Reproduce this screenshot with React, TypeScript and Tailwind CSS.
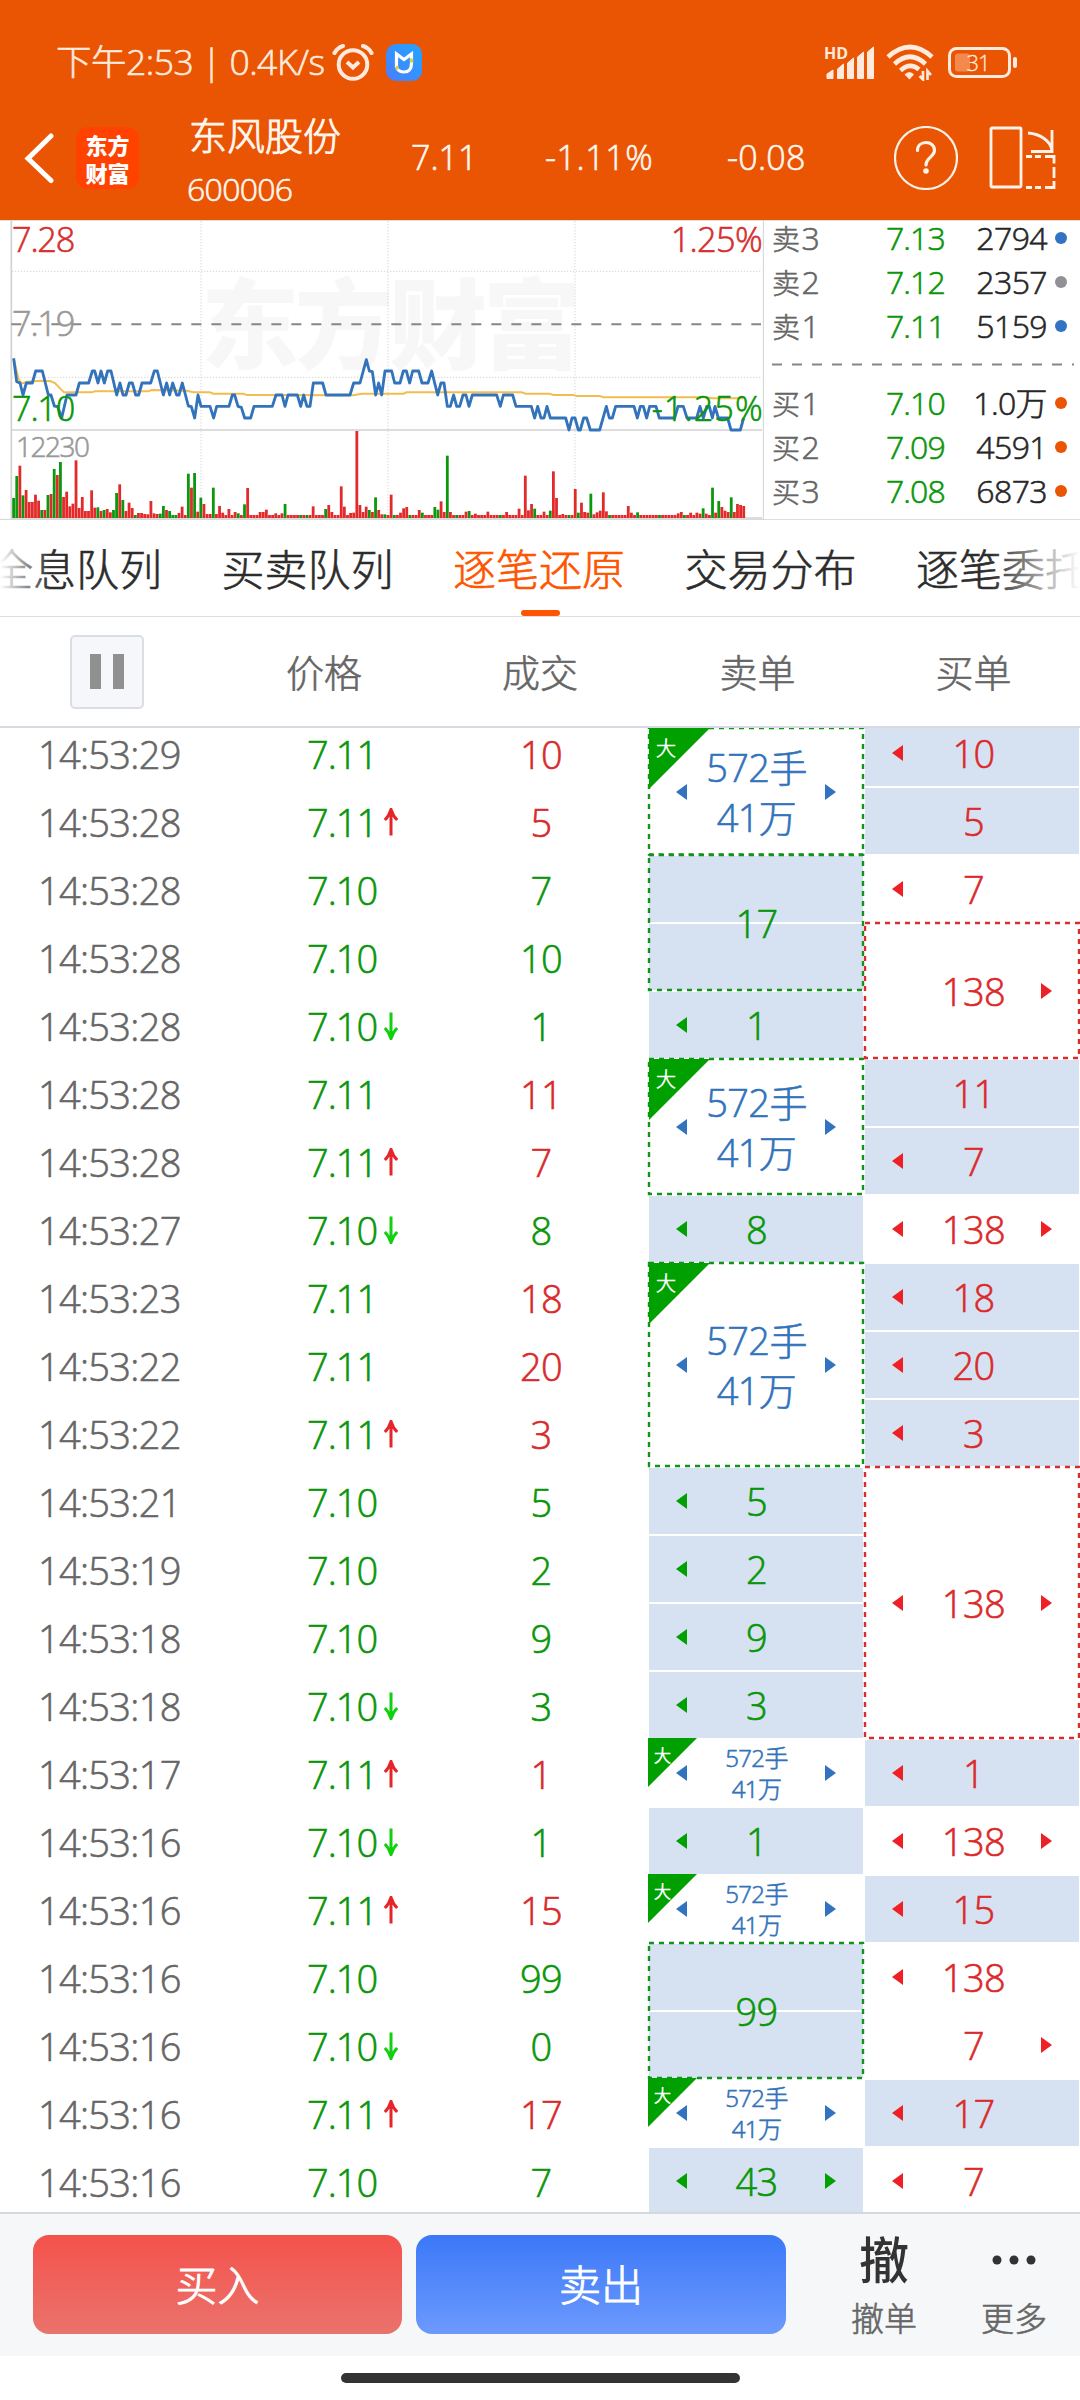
import React from "react";

const GREEN = "#0a960a";
const RED = "#ee1f25";
const BLUE = "#3273c0";

/* ---------- status bar ---------- */

function StatusBar() {
  return (
    <div className="flex h-[124px] items-center pl-[56px] pr-[62px] text-[#ffeadd]">
      <span className="w-[269px] whitespace-nowrap text-[35.5px] leading-none tracking-[-0.5px]">
        下午2:53 | 0.4K/s
      </span>
      <svg className="ml-[7px] h-[40px] w-[42px]" viewBox="0 0 42 40" fill="none" stroke="#ffeadd">
        <circle cx="21" cy="22.5" r="14.3" strokeWidth="4" />
        <path d="M15 20l6 5.500 6-5.500" strokeWidth="4" />
        <path d="M2.500 11Q5 6 11 4M39.500 11Q37 6 31 4" strokeWidth="4" strokeLinecap="round" />
      </svg>
      <svg className="ml-[12px] h-[37px] w-[36px]" viewBox="0 0 36 37">
        <defs>
          <linearGradient id="home" x1="0" y1="1" x2="1" y2="0">
            <stop offset="0" stopColor="#4a7dff" />
            <stop offset="1" stopColor="#22a5ff" />
          </linearGradient>
        </defs>
        <rect width="36" height="37" rx="10" fill="url(#home)" />
        <path
          d="M10.500 24V10l7.500 5.500 7.500-5.500v9.500c0 5.500-3 8.500-7.500 8.500-3.500 0-5.500-1.200-7-3.500"
          fill="none"
          stroke="#fff"
          strokeWidth="3.200"
        />
        <path d="M25.500 14.500v4M10 22.500l2 3" stroke="#d9d43c" strokeWidth="3.200" />
      </svg>
      <svg className="ml-auto h-[36px] w-[52px] overflow-visible" viewBox="0 0 52 36">
        <text x="0" y="14.500" fontSize="16" fontWeight="700" fill="#ffeadd" textLength="24">
          HD
        </text>
        <path
          d="M3 30l6-4v8.500H3zM13.500 25l6-5v14.500h-6zM23.500 19l6-5v20.500h-6zM33.500 13l6-5v26.500h-6zM43.500 8l6-5v31.500h-6z"
          fill="#ffeadd"
          stroke="#ffeadd"
          strokeLinejoin="round"
        />
      </svg>
      <svg className="ml-[10px] h-[38px] w-[48px]" viewBox="0 0 48 38" fill="none" stroke="#ffeadd" strokeWidth="4.600">
        <path d="M2 14Q24-6 46 14" />
        <path d="M8.500 21Q24 6.500 39.500 21" />
        <path d="M14.500 27.500Q24 19 33 26.500" />
        <path d="M18.500 31.500Q23.500 26.500 28 31.500L23.500 36.500z" fill="#ffeadd" stroke="none" />
        <path d="M37 28v8.500l-3.500-3.500M41.500 37v-9l3.500 4" strokeWidth="2.600" />
      </svg>
      <svg className="ml-[14px] h-[32px] w-[70px]" viewBox="0 0 70 32">
        <rect x="1.500" y="2.500" width="60" height="28" rx="7" fill="none" stroke="#ffeadd" strokeWidth="3" />
        <rect x="7" y="7.500" width="15" height="18" rx="3" fill="#f5884d" />
        <rect x="65" y="11" width="4" height="11" rx="2" fill="#ffeadd" />
        <text x="18.500" y="24.500" fontSize="22" fill="#ffeadd" stroke="#ffeadd" strokeWidth="0.300" textLength="24">
          31
        </text>
      </svg>
    </div>
  );
}

/* ---------- title bar ---------- */

function TitleBar() {
  return (
    <div className="flex h-[96px] items-start pl-[24px] text-[#fff7f0]">
      <svg className="mt-[8px] h-[52px] w-[32px]" viewBox="0 0 32 52" fill="none" stroke="#fff" strokeWidth="5" strokeLinecap="round">
        <path d="M27 4L4 26.500 27 48.500" />
      </svg>
      <div className="ml-[20px] mt-[3px] flex h-[62px] w-[63px] flex-col items-center justify-center rounded-[12px] bg-[#ff4200] font-['Noto_Sans_CJK_SC',sans-serif] text-[22px] font-black leading-[28px] text-white [-webkit-text-stroke:0]">
        <span>东方</span>
        <span>财富</span>
      </div>
      <div className="ml-[48px] w-[224px] whitespace-nowrap">
        <div className="pl-[2px] text-[38px] leading-[22px] [-webkit-text-stroke:0.9px]">东风股份</div>
        <div className="mt-[31px] text-[32px] leading-[24px] tracking-[-0.7px]">600006</div>
      </div>
      <span className="mt-[15px] w-[134px] whitespace-nowrap text-[34px] leading-[36px]">7.11</span>
      <span className="mt-[15px] w-[182px] whitespace-nowrap text-[34px] leading-[36px] tracking-[0.6px]">-1.11%</span>
      <span className="mt-[15px] w-[167px] whitespace-nowrap text-[34px] leading-[36px] tracking-[0.3px]">-0.08</span>
      <svg className="mt-[2px] h-[64px] w-[64px]" viewBox="0 0 64 64" fill="none" stroke="#fff2e8">
        <circle cx="32" cy="32" r="31" strokeWidth="2.200" />
        <path d="M23.500 24.500c0-5 3.800-8 8.500-8s8.500 3 8.500 7.800c0 6.500-8.500 7.200-8.500 14.700" strokeWidth="3.200" strokeLinecap="round" />
        <circle cx="32" cy="45" r="2.800" fill="#fff2e8" stroke="none" />
      </svg>
      <svg className="ml-[31px] mt-[2px] h-[66px] w-[68px]" viewBox="0 0 68 66" fill="none" stroke="#fff2e8" strokeWidth="2.800">
        <rect x="2" y="2" width="30" height="59" rx="1" />
        <path d="M39 7c13 1 22 8 24 17" />
        <path d="M63 4v21.500H42" />
        <path d="M37 30.500h6M46 30.500h6M56 30.500h9v7M65 41v11M65 55v6.500h-9M52 61.500h-6M43 61.500h-6" />
      </svg>
    </div>
  );
}

/* ---------- intraday chart ---------- */

const PRICE_POINTS =
  "41,430 50,500 60,504 69,540 79,504 97,504 107,468 127,468 145,540 153,540 163,573 173,575 185,609 201,540 228,540 238,504 266,504 277,468 284,468 294,504 303,468 313,504 323,468 333,468 350,540 360,504 369,540 378,540 388,504 397,504 407,540 416,540 426,504 452,504 463,468 472,468 490,540 500,504 509,540 518,504 530,540 537,540 547,504 565,573 574,575 584,609 594,540 603,574 630,574 641,609 650,574 687,574 697,540 704,540 714,574 724,577 734,609 752,609 762,574 817,574 828,540 846,540 855,574 864,540 892,540 902,574 911,540 921,574 930,574 940,504 968,504 978,540 1050,540 1061,504 1080,504 1099,434 1108,468 1117,470 1127,540 1136,504 1145,540 1155,468 1175,468 1184,504 1200,504 1210,468 1219,468 1229,504 1238,468 1256,468 1266,504 1284,504 1295,468 1313,540 1323,504 1332,504 1342,574 1351,574 1361,540 1370,574 1379,574 1389,540 1398,540 1407,574 1417,540 1490,540 1501,574 1510,540 1538,540 1548,574 1594,574 1604,609 1613,574 1623,609 1632,609 1641,574 1651,609 1697,609 1707,645 1716,609 1725,609 1735,645 1741,645 1751,609 1760,609 1771,645 1799,645 1819,574 1828,609 1837,609 1847,574 1902,574 1912,609 1921,574 1930,574 1940,609 1949,574 1968,574 1978,609 2024,609 2034,574 2050,574 2061,609 2090,609 2100,574 2110,609 2120,574 2128,574 2137,609 2145,574 2155,609 2183,609 2193,645 2221,645 2231,609";

const AVERAGE_POINTS =
  "41,430 55,490 65,506 80,500 125,497 150,498 165,504 180,520 192,532 275,532 285,529 445,529 455,525 560,527 580,532 630,532 640,536 730,536 740,540 1060,541 1085,536 1210,536 1220,532 1565,532 1577,536 1648,536 1660,540 1720,540 1730,543 1800,543 1810,547 2120,547 2135,550 2230,550";

/* minute index -> [bar height, 1 when falling] */
const VOLUME: Record<number, [number, number]> = {
  0: [60, 1], 1: [126, 1], 2: [157, 0], 3: [68, 1], 4: [84, 0], 5: [48, 0], 6: [48, 0], 7: [70, 0], 8: [52, 0], 9: [24, 1],
  10: [24, 0], 11: [69, 1], 12: [72, 0], 13: [147, 1], 14: [129, 0], 15: [168, 1], 16: [63, 0], 17: [79, 0], 18: [35, 0], 19: [43, 0],
  20: [173, 0], 21: [30, 0], 22: [63, 0], 23: [21, 0], 24: [21, 0], 25: [83, 0], 26: [31, 0], 27: [32, 1], 28: [21, 0], 29: [24, 1],
  30: [27, 0], 31: [17, 0], 32: [24, 1], 33: [75, 1], 34: [101, 0], 35: [54, 1], 36: [21, 0], 37: [46, 0], 38: [30, 0], 39: [9, 1],
  40: [15, 0], 41: [15, 0], 42: [12, 0], 43: [11, 0], 44: [51, 0], 45: [14, 0], 46: [12, 0], 47: [13, 1], 48: [36, 1], 49: [24, 0],
  50: [21, 1], 51: [9, 1], 52: [9, 1], 53: [15, 0], 54: [34, 0], 55: [9, 0], 56: [133, 1], 57: [91, 0], 58: [135, 1], 59: [19, 0],
  60: [61, 1], 61: [42, 0], 62: [12, 0], 63: [12, 0], 64: [91, 1], 65: [12, 0], 66: [36, 0], 67: [16, 0], 69: [27, 0], 71: [18, 0],
  72: [14, 1], 74: [41, 1], 75: [90, 0], 79: [18, 0], 80: [18, 0], 81: [25, 0], 84: [14, 0], 86: [14, 0], 87: [42, 1], 92: [9, 1],
  94: [9, 1], 96: [35, 0], 100: [27, 1], 101: [39, 0], 102: [18, 0], 105: [95, 0], 106: [34, 0], 108: [15, 0], 109: [16, 0], 110: [261, 0],
  111: [39, 0], 112: [18, 0], 113: [34, 0], 114: [24, 1], 115: [18, 0], 116: [62, 1], 117: [24, 0], 118: [11, 0], 119: [11, 1], 121: [70, 0],
  122: [9, 1], 124: [16, 0], 125: [29, 0], 126: [33, 0], 127: [9, 1], 130: [24, 0], 131: [16, 1], 135: [33, 1], 136: [25, 1], 137: [50, 0],
  138: [18, 0], 139: [187, 1], 140: [18, 0], 142: [9, 1], 145: [19, 0], 146: [21, 1], 148: [13, 0], 152: [19, 0], 156: [9, 1], 158: [18, 0],
  162: [28, 0], 164: [127, 0], 165: [23, 0], 166: [42, 0], 167: [28, 1], 170: [19, 0], 172: [22, 1], 173: [140, 0], 174: [60, 0], 176: [12, 0],
  178: [9, 1], 180: [87, 0], 181: [16, 1], 182: [46, 0], 183: [18, 0], 184: [16, 0], 185: [73, 1], 186: [11, 0], 187: [17, 0], 188: [22, 0],
  189: [77, 0], 190: [20, 0], 191: [9, 1], 197: [36, 0], 198: [16, 0], 200: [17, 1], 207: [9, 1], 213: [14, 0], 214: [18, 0], 215: [9, 1],
  217: [16, 0], 219: [16, 0], 220: [13, 0], 221: [29, 1], 222: [13, 0], 224: [91, 1], 225: [16, 0], 226: [51, 1], 227: [33, 0], 228: [22, 0],
  229: [18, 0], 230: [62, 1], 231: [18, 0], 232: [42, 0], 233: [39, 0], 234: [36, 0],
};

const MINUTES = Array.from({ length: 235 }, (_, i) => i);

function ChartLabel({ x, y, width, color, size = 103, children }: { x: number; y: number; width: number; color: string; size?: number; children: string }) {
  return (
    <text x={x} y={y} fontSize={size} fill={color} stroke={color} strokeWidth="1.800" textLength={width}>
      {children}
    </text>
  );
}

function Chart() {
  return (
    <svg className="h-[300px] w-[764px] shrink-0 overflow-visible" viewBox="0 15 2292 900">
      <text x="603" y="438" fontSize="294" fontWeight="900" fill="#f7f7f7" textLength="1140" fontFamily="Noto Sans CJK SC, sans-serif">
        东方财富
      </text>
      <g fill="none" stroke="#d6d6d6" strokeWidth="3" strokeDasharray="4 5">
        <path d="M36 169H2286M36 487H2286M603 18V909M1164 18V909M1725 18V909" />
      </g>
      <g fill="none" stroke="#d2d2d2">
        <path d="M0 16.500H2292" strokeWidth="3" stroke="#dddddd" />
        <path d="M34 16V912" strokeWidth="5" />
        <path d="M34 645H2286M34 909H2286" strokeWidth="5" />
        <path d="M2290 16V912" strokeWidth="3" />
        <path d="M0 913H2292" strokeWidth="3" />
      </g>
      <path d="M34 328H2283" fill="none" stroke="#868686" strokeWidth="6" strokeDasharray="30 30" />
      {MINUTES.map((i) => {
        const [h, down] = VOLUME[i] ?? [9, 0];
        return <rect key={i} x={36.7 + i * 9.36} y={909 - h} width="8.400" height={h} fill={down ? "#0c970c" : "#e32a2b"} />;
      })}
      <polyline points={AVERAGE_POINTS} fill="none" stroke="#f2bd4d" strokeWidth="6" />
      <polyline points={PRICE_POINTS} fill="none" stroke="#3273bb" strokeWidth="8.500" strokeLinejoin="round" />
      <ChartLabel x={36} y={110} width={190} color="#d62f2f">7.28</ChartLabel>
      <ChartLabel x={36} y={362} width={190} color="#999999">7.19</ChartLabel>
      <ChartLabel x={36} y={617} width={190} color={GREEN}>7.10</ChartLabel>
      <ChartLabel x={2012} y={110} width={276} color="#d62f2f">1.25%</ChartLabel>
      <ChartLabel x={1955} y={617} width={333} color={GREEN}>-1.25%</ChartLabel>
      <ChartLabel x={48} y={725} width={222} color="#999999" size={84}>12230</ChartLabel>
    </svg>
  );
}

/* ---------- order book ---------- */

type Quote = { label: string; price: string; volume: string; dot: string };

const ASKS: Quote[] = [
  { label: "卖3", price: "7.13", volume: "2794", dot: "bg-[#3274c2]" },
  { label: "卖2", price: "7.12", volume: "2357", dot: "bg-[#919097]" },
  { label: "卖1", price: "7.11", volume: "5159", dot: "bg-[#3274c2]" },
];

const BIDS: Quote[] = [
  { label: "买1", price: "7.10", volume: "1.0万", dot: "bg-[#ea5504]" },
  { label: "买2", price: "7.09", volume: "4591", dot: "bg-[#ea5504]" },
  { label: "买3", price: "7.08", volume: "6873", dot: "bg-[#ea5504]" },
];

function QuoteRow({ label, price, volume, dot }: Quote) {
  return (
    <div className="flex h-[44px] items-center text-[32px] leading-none tracking-[-0.6px]">
      <span className="w-[114px] text-[28px] text-[#666666]">
        {label[0]}
        <span className="ml-[2px] text-[32px]">{label[1]}</span>
      </span>
      <span className="w-[70px] tracking-[-0.9px] text-[#0a960a]">{price}</span>
      <span className="w-[91px] text-right text-[#262626]">{volume}</span>
      <span className={`ml-[8px] h-[12px] w-[12px] rounded-full ${dot}`} />
    </div>
  );
}

function OrderBook() {
  return (
    <div className="flex flex-1 flex-col border-b border-t border-[#dddddd] pl-[8px]">
      <div className="-mt-[5px]">
        {ASKS.map((q) => (
          <QuoteRow key={q.label} {...q} />
        ))}
      </div>
      <svg className="mt-[15px] h-[3px] w-[302px]" viewBox="0 0 302 3">
        <path d="M0 1.500H302" stroke="#868686" strokeWidth="2" strokeDasharray="10 10" />
      </svg>
      <div className="mt-[15px]">
        {BIDS.map((q) => (
          <QuoteRow key={q.label} {...q} />
        ))}
      </div>
    </div>
  );
}

/* ---------- tabs ---------- */

const TABS = ["全息队列", "买卖队列", "逐笔还原", "交易分布", "逐笔委托"];

function Tabs() {
  return (
    <div className="relative flex h-[97px] justify-center overflow-hidden border-b border-[#dddddd] whitespace-nowrap">
      {TABS.map((t) => {
        const active = t === "逐笔还原";
        return (
          <div
            key={t}
            className={`flex w-[231.500px] shrink-0 flex-col items-center text-[43px] ${active ? "text-[#fe5500]" : "text-[#2c2c2c]"}`}
          >
            <span className="-ml-[2px] mt-[25px] leading-[50px]">{t}</span>
            {active && <span className="mt-[15px] h-[6px] w-[39px] rounded-[3px] bg-[#fe5500]" />}
          </div>
        );
      })}
      <div className="absolute inset-y-0 left-0 w-[50px] bg-gradient-to-r from-white to-white/0" />
      <div className="absolute inset-y-0 right-0 w-[90px] bg-gradient-to-l from-white to-white/0" />
    </div>
  );
}

/* ---------- trade table ---------- */

type Trade = [time: string, price: string, dir: "" | "u" | "d", count: number, up: boolean];

const TRADES: Trade[] = [
  ["14:53:29", "7.11", "", 10, true],
  ["14:53:28", "7.11", "u", 5, true],
  ["14:53:28", "7.10", "", 7, false],
  ["14:53:28", "7.10", "", 10, false],
  ["14:53:28", "7.10", "d", 1, false],
  ["14:53:28", "7.11", "", 11, true],
  ["14:53:28", "7.11", "u", 7, true],
  ["14:53:27", "7.10", "d", 8, false],
  ["14:53:23", "7.11", "", 18, true],
  ["14:53:22", "7.11", "", 20, true],
  ["14:53:22", "7.11", "u", 3, true],
  ["14:53:21", "7.10", "", 5, false],
  ["14:53:19", "7.10", "", 2, false],
  ["14:53:18", "7.10", "", 9, false],
  ["14:53:18", "7.10", "d", 3, false],
  ["14:53:17", "7.11", "u", 1, true],
  ["14:53:16", "7.10", "d", 1, false],
  ["14:53:16", "7.11", "u", 15, true],
  ["14:53:16", "7.10", "", 99, false],
  ["14:53:16", "7.10", "d", 0, false],
  ["14:53:16", "7.11", "u", 17, true],
  ["14:53:16", "7.10", "", 7, false],
];

function PriceArrow({ dir }: { dir: "u" | "d" }) {
  return (
    <svg
      className={`h-[28px] w-[16px] ${dir === "d" ? "rotate-180" : ""}`}
      viewBox="0 0 16 28"
      fill="none"
      stroke={dir === "u" ? "#e5252a" : "#10d010"}
      strokeWidth="3"
    >
      <path d="M8 27.500V2M1.800 12Q6 8 8 1.500Q10 8 14.200 12" />
    </svg>
  );
}

type Order = {
  text: string;
  span?: number;
  fill?: boolean;
  left?: boolean;
  right?: boolean;
  box?: boolean;
  big?: boolean;
};

const SELL: Order[] = [
  { text: "572手", big: true, span: 0, box: true, left: true, right: true },
  { text: "17", span: 2, box: true, fill: true },
  { text: "1", fill: true, left: true },
  { text: "572手", big: true, span: 2, box: true, left: true, right: true },
  { text: "8", fill: true, left: true },
  { text: "572手", big: true, span: 3, box: true, left: true, right: true },
  { text: "5", fill: true, left: true },
  { text: "2", fill: true, left: true },
  { text: "9", fill: true, left: true },
  { text: "3", fill: true, left: true },
  { text: "572手", big: true, left: true, right: true },
  { text: "1", fill: true, left: true },
  { text: "572手", big: true, left: true, right: true },
  { text: "99", span: 2, box: true, fill: true },
  { text: "572手", big: true, left: true, right: true },
  { text: "43", fill: true, left: true, right: true },
];

const BUY: Order[] = [
  { text: "10", fill: true, left: true },
  { text: "5", fill: true },
  { text: "7", left: true },
  { text: "138", span: 2, box: true, right: true },
  { text: "11", fill: true },
  { text: "7", fill: true, left: true },
  { text: "138", left: true, right: true },
  { text: "18", fill: true, left: true },
  { text: "20", fill: true, left: true },
  { text: "3", fill: true, left: true },
  { text: "138", span: 4, box: true, left: true, right: true },
  { text: "1", fill: true, left: true },
  { text: "138", left: true, right: true },
  { text: "15", fill: true, left: true },
  { text: "138", left: true },
  { text: "7", right: true },
  { text: "17", fill: true, left: true },
  { text: "7", left: true },
];

/* Span 0 is the partly scrolled two-row block at the top of the list. */
const HEIGHTS: Record<number, string> = {
  0: "h-[127px]",
  1: "h-[68px]",
  2: "h-[136px]",
  3: "h-[204px]",
  4: "h-[272px]",
};

function Triangle({ color, flip, show }: { color: string; flip?: boolean; show?: boolean }) {
  return (
    <svg className={`h-[16px] w-[11px] shrink-0 ${flip ? "rotate-180" : ""} ${show ? "" : "invisible"}`} viewBox="0 0 11 16">
      <path d="M0 8L11 0V16z" fill={color} />
    </svg>
  );
}

function CornerFlag({ large }: { large: boolean }) {
  return (
    <div className={`absolute ${large ? "left-[1px] top-0 h-[61px] w-[61px]" : "left-0 top-[-1px] h-[49px] w-[49px]"}`}>
      <svg className="absolute inset-0 h-full w-full" viewBox="0 0 60 60">
        <path d="M0 0H60L0 60z" fill="#00a000" />
      </svg>
      <span
        className={`absolute leading-none text-white ${large ? "left-[7px] top-[11px] text-[20px]" : "left-[6px] top-[9px] text-[17px]"}`}
      >
        大
      </span>
    </div>
  );
}

function OrderCell({ order, side }: { order: Order; side: "sell" | "buy" }) {
  const { text, span = 1, fill, left, right, box, big } = order;
  const arrow = big ? BLUE : side === "sell" ? "#00a000" : RED;
  const color = big ? "text-[#3273bb]" : side === "sell" ? "text-[#0a960a]" : "text-[#db2a2c]";
  const bands = Array.from({ length: span || 2 }, (_, i) => i);
  return (
    <div className={`relative shrink-0 ${HEIGHTS[span]}`}>
      {fill && (
        <div className="absolute inset-x-px inset-y-0 flex flex-col">
          {bands.map((b) => (
            <div key={b} className="my-px flex-1 bg-[#d6e2f2]" />
          ))}
        </div>
      )}
      {box && (
        <svg className="absolute inset-0 h-full w-full overflow-visible">
          <rect
            x="1"
            y="0"
            width="214"
            height={span ? span * 68 - 1 : 126.5}
            fill="none"
            stroke={side === "sell" ? "#10941a" : "#d92c2e"}
            strokeWidth="2.400"
            strokeDasharray="5 5"
          />
        </svg>
      )}
      {big && <CornerFlag large={!!box} />}
      <div className="relative flex h-full items-center justify-between pl-[28px] pr-[28px]">
        <Triangle color={arrow} show={left} />
        <div
          className={`flex flex-col items-center whitespace-nowrap tracking-[-0.6px] ${color} ${
            side === "sell" ? "ml-px" : "ml-[3px]"
          } ${big && !box ? "text-[24px] leading-[31px]" : "text-[38px] leading-[50px]"}`}
        >
          <span>{text}</span>
          {big && <span>41万</span>}
        </div>
        <Triangle color={arrow} flip show={right} />
      </div>
    </div>
  );
}

function TradeTable() {
  return (
    <>
      <div className="grid h-[111px] grid-cols-5 items-center border-b-2 border-[#d5dbe0] text-center text-[38px] leading-none text-[#666666]">
        <div className="flex justify-center pr-[2px]">
          <div className="flex h-[74px] w-[74px] items-center justify-center gap-[12px] rounded-[5px] border-2 border-[#dadde2] bg-[#f6f7fa]">
            <span className="h-[35px] w-[11px] bg-[#909090]" />
            <span className="h-[35px] w-[11px] bg-[#909090]" />
          </div>
        </div>
        <span>价格</span>
        <span>成交</span>
        <span className="pl-[3px]">卖单</span>
        <span className="pl-[3px]">买单</span>
      </div>
      <div className="flex h-[1484px] overflow-hidden">
        <div className="-mt-[8px] flex w-[648px] flex-col">
          {TRADES.map(([time, price, dir, count, up], i) => (
            <div key={i} className="flex h-[68px] shrink-0 items-center text-[38px] leading-none tracking-[-0.7px]">
              <span className="w-[307px] pl-[38px] text-[#666666]">{time}</span>
              <span className="w-[76px] tracking-[-1px] text-[#0a960a]">{price}</span>
              <span className="w-[50px]">{dir && <PriceArrow dir={dir} />}</span>
              <span className={`w-[215px] pl-px text-center ${up ? "text-[#d92a2c]" : "text-[#0a960a]"}`}>{count}</span>
            </div>
          ))}
        </div>
        <div className="flex w-[216px] flex-col">
          {SELL.map((o, i) => (
            <OrderCell key={i} order={o} side="sell" />
          ))}
        </div>
        <div className="-mt-[9px] flex w-[216px] flex-col">
          {BUY.map((o, i) => (
            <OrderCell key={i} order={o} side="buy" />
          ))}
        </div>
      </div>
    </>
  );
}

/* ---------- bottom actions ---------- */

function BottomBar() {
  return (
    <div className="flex h-[144px] items-start border-t-2 border-[#d5d9de] bg-[#f6f7f9] pl-[33px] pt-[21px]">
      <button className="h-[99px] w-[369px] rounded-[16px] bg-gradient-to-b from-[#f4514b] to-[#ea726c] text-[42px] leading-none text-white [-webkit-text-stroke:0.9px]">
        买入
      </button>
      <button className="ml-[14px] h-[99px] w-[370px] rounded-[16px] bg-gradient-to-b from-[#3b78f8] to-[#6c99fd] text-[42px] leading-none text-white [-webkit-text-stroke:0.9px]">
        卖出
      </button>
      <div className="-mt-[3px] ml-[33px] flex w-[130px] flex-col items-center">
        <span className="font-['Noto_Sans_CJK_SC',sans-serif] text-[50px] font-medium leading-[50px] text-[#333333] [-webkit-text-stroke:0]">撤</span>
        <span className="mt-[20px] text-[33px] leading-[33px] text-[#666666]">撤单</span>
      </div>
      <div className="-mt-[3px] flex w-[130px] flex-col items-center">
        <svg className="h-[50px] w-[46px]" viewBox="0 0 46 50" fill="#333333">
          <circle cx="6" cy="28" r="4.500" />
          <circle cx="23" cy="28" r="4.500" />
          <circle cx="40" cy="28" r="4.500" />
        </svg>
        <span className="mt-[20px] text-[33px] leading-[33px] text-[#666666]">更多</span>
      </div>
    </div>
  );
}

export default function App() {
  return (
    <div className="flex h-[2400px] w-[1080px] flex-col overflow-hidden bg-white font-['Open_Sans','Noto_Sans_CJK_SC',sans-serif] font-light [-webkit-text-stroke:0.6px]">
      <header className="bg-[#ea5504]">
        <StatusBar />
        <TitleBar />
      </header>
      <div className="flex h-[300px]">
        <Chart />
        <OrderBook />
      </div>
      <Tabs />
      <TradeTable />
      <BottomBar />
      <div className="flex flex-1 justify-center pt-[17px]">
        <div className="h-[10px] w-[399px] rounded-full bg-[#333333]" />
      </div>
    </div>
  );
}
